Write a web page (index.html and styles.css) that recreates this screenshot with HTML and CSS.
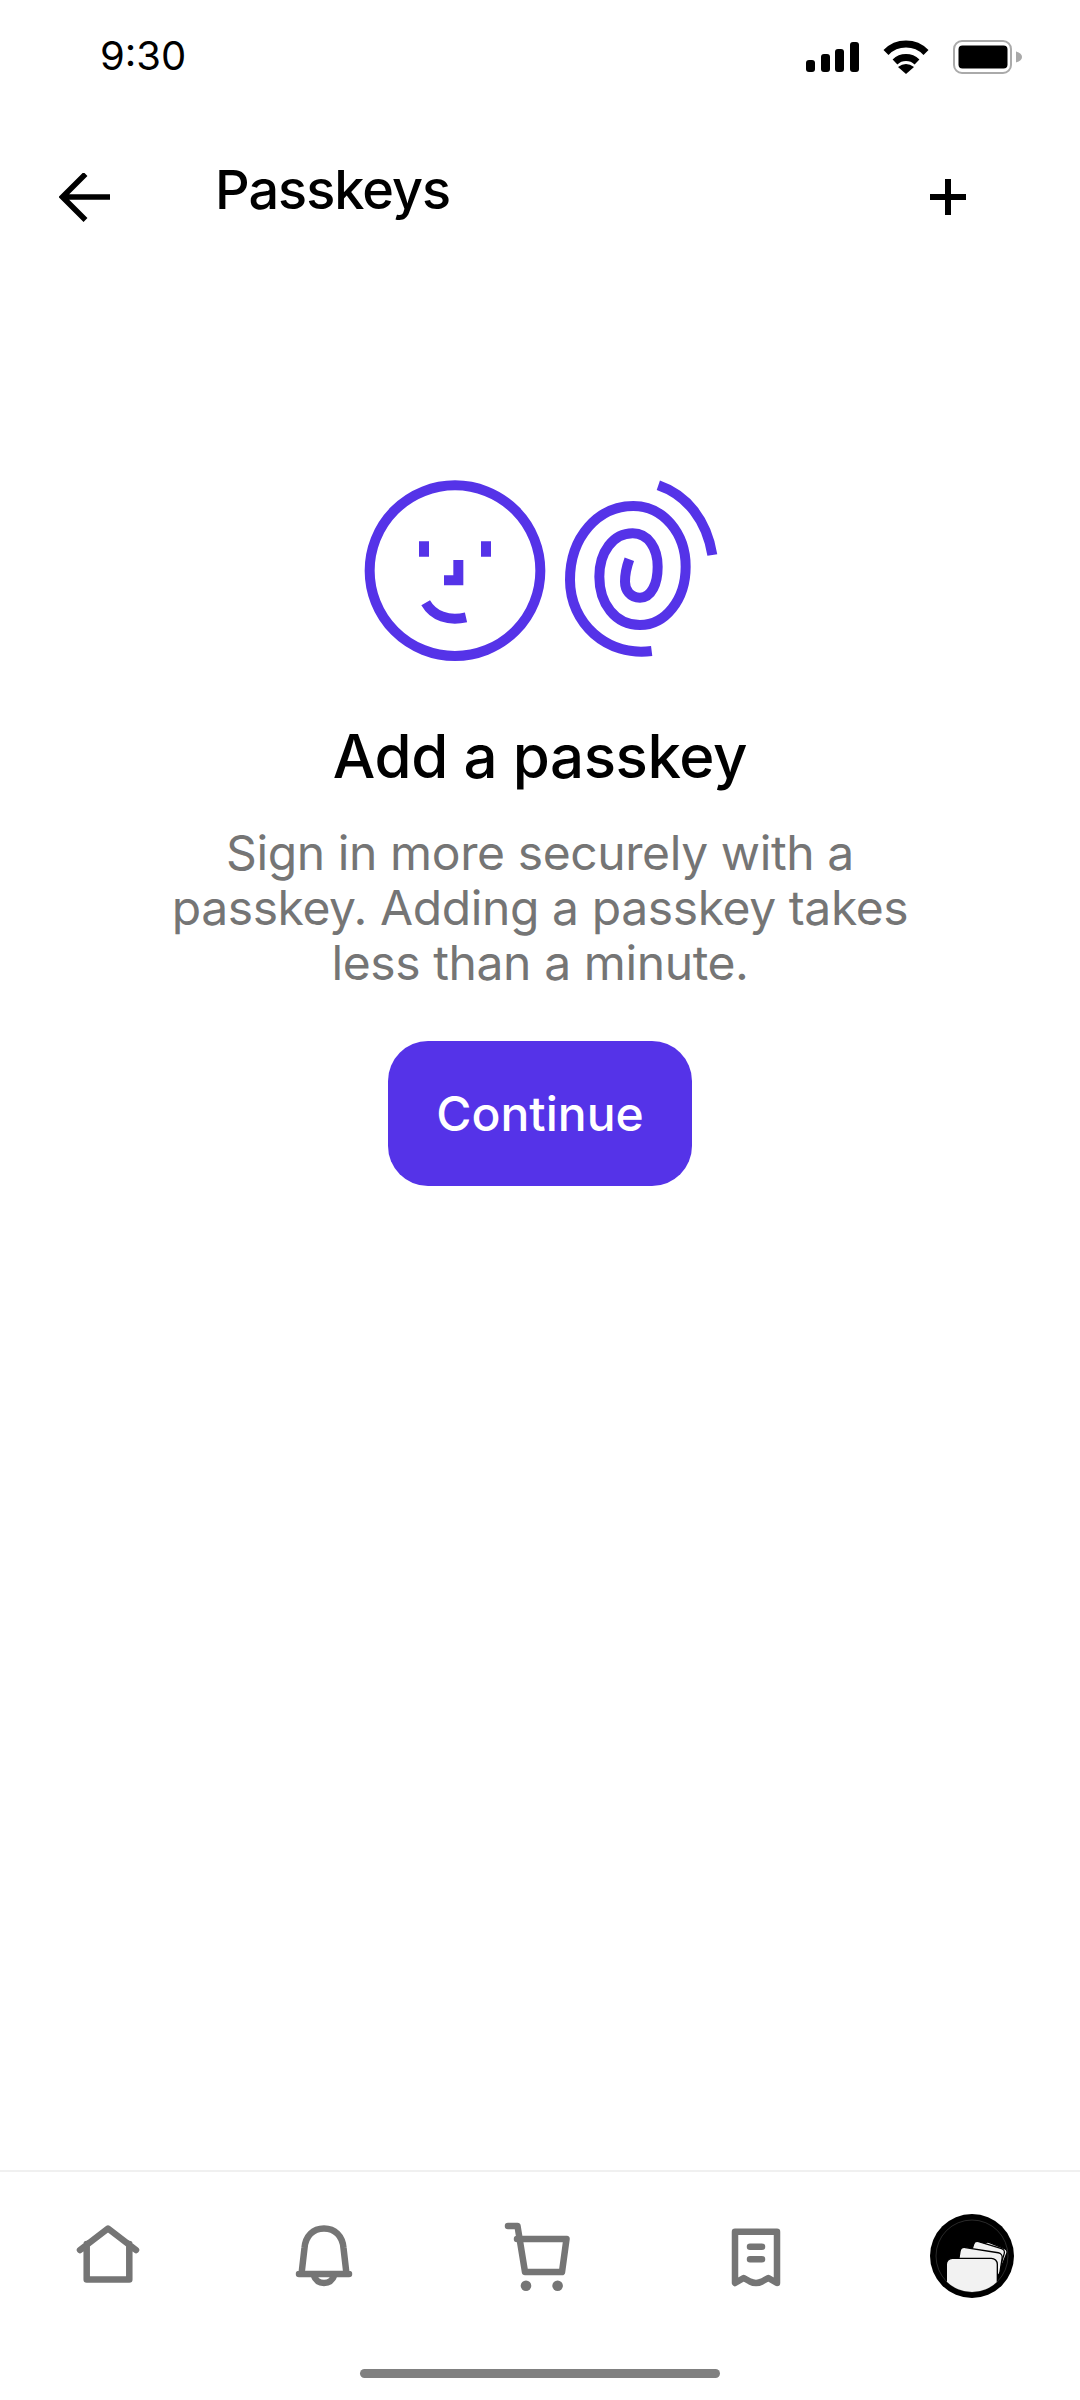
FILE: index.html
```html
<!DOCTYPE html>
<html lang="en">
<head>
<meta charset="utf-8">
<title>Passkeys</title>
<link rel="stylesheet" href="styles.css">
</head>
<body>
<div class="phone">
  <div class="status">
    <span class="time">9:30</span>
    <div class="status-icons">
      <svg class="signal" viewBox="0 0 53 30" width="53" height="30"><rect x="0" y="18" width="9" height="12" rx="3"/><rect x="15" y="12" width="9" height="18" rx="3"/><rect x="29" y="7" width="9" height="23" rx="3"/><rect x="44" y="0" width="9" height="30" rx="3"/></svg>
      <svg class="wifi" viewBox="0 0 46 34" width="46" height="34"><path class="wifi-arc" d="M3 12.500A28 28 0 0 1 43 12.500"/><path class="wifi-arc" d="M12 22A16 16 0 0 1 34 22"/><path d="M15 27Q23 21 31 27L23 34Z"/></svg>
      <svg class="battery" viewBox="0 0 69 34" width="69" height="34"><rect class="battery-shell" x="1" y="1" width="57" height="32" rx="8"/><rect x="5.500" y="5.500" width="49" height="23" rx="4"/><path class="battery-nub" d="M63 11.500C67 12.500 69 14.500 69 17C69 19.500 67 21.500 63 22.500Z"/></svg>
    </div>
  </div>

  <header class="topbar">
    <svg class="back" viewBox="0 0 52 52" width="52" height="52"><path d="M51 24H4M26.500 1L3.500 24L26.500 47"/></svg>
    <h1 class="title">Passkeys</h1>
    <svg class="add" viewBox="0 0 36 36" width="36" height="36"><path d="M18 0V36M0 18H36"/></svg>
  </header>

  <main class="content">
    <svg class="hero" viewBox="0 0 1200 660" width="400" height="220">
      <circle cx="345" cy="332" r="256"/>
      <path d="M252 244V290M438 244V290M355 300V361H312M257 428C280 468 325 484 378 472"/>
      <path d="M955 76C1040 105 1100 180 1117 285M935 573C800 590 690 490 690 360C690 230 775 138 880 138C970 138 1037 220 1037 320C1037 420 975 495 900 495C825 495 778 430 778 350C778 275 820 220 878 220C925 220 953 265 953 320C953 370 935 413 900 413C870 413 855 390 855 365C855 340 860 320 868 298"/>
    </svg>
    <h2 class="heading">Add a passkey</h2>
    <p class="body">Sign in more securely with a<br>passkey. Adding a passkey takes<br>less than a minute.</p>
    <button class="cta" type="button">Continue</button>
  </main>

  <nav class="tabs">
    <svg class="tab" viewBox="0 0 84 84" width="84" height="84"><path d="M14 36L42 14.500L70 36M20.700 30V65.500H63.300V30"/></svg>
    <svg class="tab" viewBox="0 0 84 84" width="84" height="84"><path d="M17 60H67M19.500 60L22.500 34C23.500 22 31 14.500 42 14.500C53 14.500 60.500 22 61.500 34L64.500 60M31.500 61C33.500 66.500 37.500 69 42 69C46.500 69 50.500 66.500 52.500 61"/></svg>
    <svg class="tab" viewBox="0 0 84 84" width="84" height="84"><path d="M10 12H19.500L27 58H64L68.500 25H19"/><circle class="wheel" cx="28" cy="71.700" r="5.300"/><circle class="wheel" cx="59.600" cy="71.700" r="5.300"/></svg>
    <svg class="tab" viewBox="0 0 84 84" width="84" height="84"><path d="M21 69V17.800H63V69L54.300 64L48 67.500Q42 70.500 36 67.500L29.700 64Z"/><path d="M36 32.700H48M36 45.300H48"/></svg>
    <svg class="wallet" viewBox="0 0 252 252" width="84" height="84">
      <defs><clipPath id="wallet-clip"><circle cx="126" cy="126" r="108"/></clipPath></defs>
      <circle class="wallet-bg" cx="126" cy="126" r="126"/>
      <circle class="wallet-ring" cx="126" cy="126" r="108"/>
      <g clip-path="url(#wallet-clip)">
        <rect class="wallet-card" x="152" y="92" width="72" height="70" rx="12" transform="rotate(22 188 127)"/>
        <rect class="wallet-card" x="122" y="92" width="96" height="70" rx="12" transform="rotate(17 170 127)"/>
        <rect class="wallet-card" x="86" y="108" width="128" height="70" rx="14" transform="rotate(9 150 143)"/>
        <rect class="wallet-card" x="49" y="133" width="153" height="120" rx="18"/>
      </g>
    </svg>
  </nav>
  <div class="home-bar"><span class="home-pill"></span></div>
</div>
</body>
</html>
```

FILE: styles.css
```css
* { box-sizing: border-box; }

html, body {
  margin: 0;
  padding: 0;
  background: #ffffff;
}

.phone {
  width: 1080px;
  height: 2400px;
  display: flex;
  flex-direction: column;
  font-family: Inter, "Liberation Sans", sans-serif;
  color: #000000;
  overflow: hidden;
}

.status {
  height: 112px;
  flex: none;
  display: flex;
  align-items: flex-start;
  justify-content: space-between;
  padding: 32px 58px 0 100px;
}

.time {
  font-size: 40px;
  line-height: 48px;
  font-weight: 400;
}

.status-icons {
  display: flex;
  align-items: flex-start;
  gap: 24px;
  padding-top: 8px;
}

.signal { fill: #000000; margin-top: 2px; }
.wifi { fill: #000000; }
.wifi-arc { fill: none; stroke: #000000; stroke-width: 7; }
.battery { fill: #000000; }
.battery-shell { fill: none; stroke: #aaaaaa; stroke-width: 2; }
.battery-nub { fill: #a9a9a9; }

.topbar {
  height: 170px;
  flex: none;
  display: flex;
  align-items: center;
  padding: 0 114px 0 59px;
}

.back {
  flex: none;
  margin-top: 4px;
  fill: none;
  stroke: #000000;
  stroke-width: 5.500;
}

.title {
  margin: 0 0 14px 104px;
  flex: 1;
  font-size: 54px;
  line-height: 64px;
  font-weight: 500;
  letter-spacing: -1px;
}

.add {
  flex: none;
  fill: none;
  stroke: #000000;
  stroke-width: 6;
}

.content {
  flex: 1;
  display: flex;
  flex-direction: column;
  align-items: center;
  padding-top: 178px;
}

.hero {
  fill: none;
  stroke: #5533e8;
  stroke-width: 30;
  flex: none;
}

.heading {
  margin: 41px 0 0;
  font-size: 60px;
  line-height: 70px;
  font-weight: 500;
  letter-spacing: -0.4px;
}

.body {
  margin: 34px 0 0;
  font-size: 48px;
  line-height: 55px;
  font-weight: 400;
  letter-spacing: -0.4px;
  color: #757575;
  text-align: center;
}

.cta {
  margin-top: 51px;
  width: 304px;
  height: 145px;
  border: 0;
  border-radius: 40px;
  background: #5533e8;
  color: #ffffff;
  font-family: inherit;
  font-size: 48px;
  font-weight: 500;
}

.tabs {
  flex: none;
  height: 170px;
  border-top: 2px solid #f0f0f0;
  display: grid;
  grid-template-columns: repeat(5, 216px);
  justify-items: center;
  padding-top: 42px;
}

.tab {
  fill: none;
  stroke: #757575;
  stroke-width: 6.500;
  stroke-linecap: round;
  stroke-linejoin: round;
}

.wheel { fill: #757575; stroke: none; }

.wallet-bg { fill: #000000; }
.wallet-ring { fill: none; stroke: #555555; stroke-width: 1.500; }
.wallet-card { fill: #f2f2f2; stroke: #000000; stroke-width: 4; }

.home-bar {
  flex: none;
  height: 60px;
  padding-top: 29px;
  display: flex;
  justify-content: center;
  align-items: flex-start;
}

.home-pill {
  width: 360px;
  height: 9px;
  border-radius: 5px;
  background: #808080;
}
```
